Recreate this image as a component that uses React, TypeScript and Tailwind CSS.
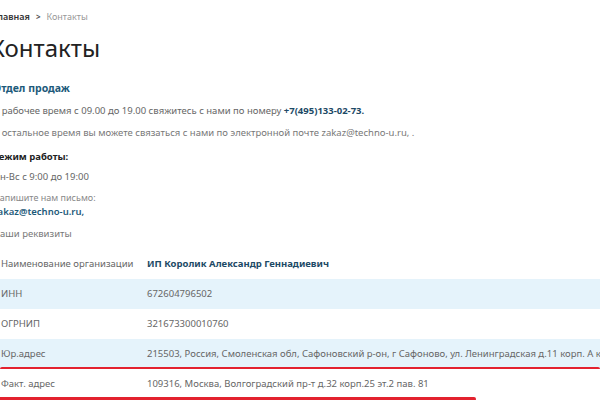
import React from "react";

const rows: Array<{ label: string; value: string; strong?: boolean; tint?: boolean; mark?: "full" | "part" }> = [
  { label: "Наименование организации", value: "ИП Королик Александр Геннадиевич", strong: true },
  { label: "ИНН", value: "672604796502", tint: true },
  { label: "ОГРНИП", value: "321673300010760" },
  {
    label: "Юр.адрес",
    value: "215503, Россия, Смоленская обл, Сафоновский р-он, г Сафоново, ул. Ленинградская д.11 корп. А кв. 10",
    tint: true,
    mark: "full",
  },
  { label: "Факт. адрес", value: "109316, Москва, Волгоградский пр-т д.32 корп.25 эт.2 пав. 81", mark: "part" },
];

export default function App() {
  return (
    <div
      className="h-[400px] w-[600px] overflow-hidden bg-white text-[#555]"
      style={{ fontFamily: '"Noto Sans", "DejaVu Sans", sans-serif' }}
    >
      <div className="-ml-[7px] w-[620px] pt-[11px]">
        <div className="flex items-center gap-[6px] text-[9px] leading-[12px]">
          <span className="font-semibold text-[#333]">Главная</span>
          <span className="text-[8px] font-bold text-[#555]">&gt;</span>
          <span className="text-[#999]">Контакты</span>
        </div>
        <h1 className="-ml-[3px] mt-[10px] text-[24px] font-normal leading-[30px] text-[#222]">Контакты</h1>
        <div className="mt-[18px] text-[10.5px] font-bold leading-[14px] text-[#1d5a7a]">Отдел продаж</div>
        <p className="mt-[9px] text-[9.5px] leading-[14px] text-[#666]">
          В рабочее время с 09.00 до 19.00 свяжитесь с нами по номеру{" "}
          <span className="font-bold text-[#1d4a66]">+7(495)133-02-73.</span>
        </p>
        <p className="mt-[8px] text-[9.5px] leading-[14px] text-[#777]">
          В остальное время вы можете связаться с нами по электронной почте zakaz@techno-u.ru, .
        </p>
        <div className="mt-[10px] text-[9.5px] font-bold leading-[14px] text-[#222]">Режим работы:</div>
        <p className="mt-[6px] text-[9.5px] leading-[14px] text-[#666]">Пн-Вс с 9:00 до 19:00</p>
        <p className="mt-[7px] text-[9px] leading-[13px] text-[#888]">Напишите нам письмо:</p>
        <p className="mt-[1px] text-[9.5px] font-semibold leading-[14px] text-[#1d5a7a]">zakaz@techno-u.ru,</p>
        <p className="mt-[8px] text-[9.5px] leading-[14px] text-[#777]">Наши реквизиты</p>
        <div className="ml-[7px] mt-[8px] w-[600px]">
          {rows.map((r) => (
            <div
              key={r.label}
              className={`relative flex h-[30px] items-center text-[9.5px] leading-[14px] ${r.tint ? "bg-[#e5f3fb]" : "bg-white"}`}
            >
              <div className="w-[147px] shrink-0 whitespace-nowrap pl-[1px] text-[#666]">{r.label}</div>
              <div className={`whitespace-nowrap ${r.strong ? "font-bold text-[#1d4a66]" : "text-[#666]"}`}>{r.value}</div>
              {r.mark === "full" && (
                <div className="absolute bottom-[-2px] left-0 h-[4px] w-[600px] rounded-full bg-[#e3222f]" />
              )}
              {r.mark === "part" && (
                <div className="absolute bottom-[-2px] left-0 h-[4px] w-[476px] rounded-r-full bg-[#e3222f]" />
              )}
            </div>
          ))}
        </div>
      </div>
    </div>
  );
}
